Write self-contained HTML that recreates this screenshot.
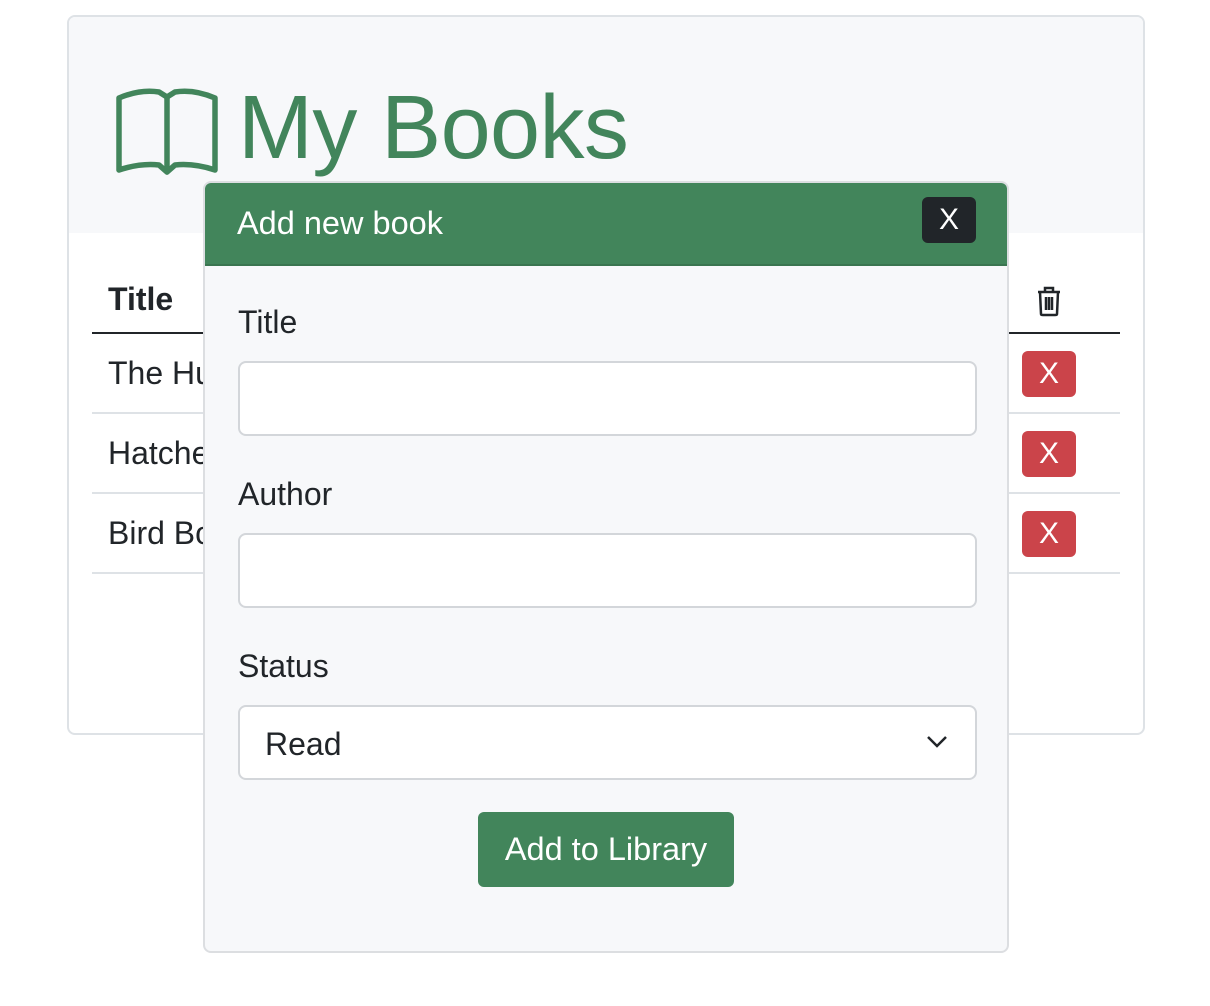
<!DOCTYPE html>
<html><head><style>
*{box-sizing:border-box;margin:0;padding:0}
body{width:1210px;height:1006px;background:#fff;font-family:"Liberation Sans",Helvetica,Arial,sans-serif;color:#212529;position:relative;overflow:hidden}
.abs{position:absolute}
.card{left:67px;top:15px;width:1078px;height:720px;border:2px solid #dee2e6;border-radius:8px;background:#fff;overflow:hidden}
.jumbo{left:0;top:0;width:100%;height:216px;background:#f7f8fa}
.h1{left:169px;top:66px;font-size:90px;color:#42855b;line-height:1;letter-spacing:-0.6px}
.row{left:23px;width:1028px;border-bottom:2px solid #dee2e6;height:80px}
.td{font-size:32px;left:16px;top:21px}
.xb{left:930px;top:17px;width:54px;height:46px;background:#cb444a;border-radius:6px;color:#fff;font-size:30px;text-align:center;line-height:46px}
.modal{left:203px;top:181px;width:806px;height:772px;background:#f7f8fa;border:2px solid #dcdee1;border-radius:8px;overflow:hidden}
.mh{left:0;top:0;width:100%;height:83px;background:#42855b;border-bottom:2px solid #3a7550}
.lbl{font-size:32px;left:33px}
.inp{left:33px;width:739px;height:75px;background:#fff;border:2px solid #d3d6da;border-radius:8px}
</style></head><body>
<div class="abs card">
 <div class="abs jumbo"></div>
 <svg class="abs" style="left:46px;top:71px" width="104" height="88" viewBox="0 0 104 88" fill="none" stroke="#42855b" stroke-width="5.5" stroke-linejoin="round">
  <path d="M4 10 Q25 1 44 4 L52 9 L60 4 Q79 1 100 10 L100 82 Q79 75 60 77 L52 84 L44 77 Q25 75 4 82 Z"/>
  <path d="M52 9 L52 82"/>
 </svg>
 <div class="abs h1">My Books</div>
 <div class="abs" style="left:39px;top:264px;font-size:32px;font-weight:bold">Title</div>
 <svg class="abs" style="left:966px;top:268px" width="28" height="32" viewBox="0 0 28 32" fill="none" stroke="#212529" stroke-width="2.5">
  <path d="M3 7 H25 M10 7 V3 H18 V7 M5 7 L6 29 Q6 30 8 30 H20 Q22 30 22 29 L23 7 M11 12 V25 M14 12 V25 M17 12 V25"/>
 </svg>
 <div class="abs" style="left:23px;top:315px;width:1028px;height:2px;background:#212529"></div>
 <div class="abs row" style="top:317px"><div class="abs td">The Hu</div><div class="abs xb">X</div></div>
 <div class="abs row" style="top:397px"><div class="abs td">Hatche</div><div class="abs xb">X</div></div>
 <div class="abs row" style="top:477px"><div class="abs td">Bird Bo</div><div class="abs xb">X</div></div>
</div>
<div class="abs modal">
 <div class="abs mh"></div>
 <div class="abs" style="left:32px;top:22px;font-size:32.5px;color:#fff">Add new book</div>
 <div class="abs" style="left:717px;top:14px;width:54px;height:46px;background:#212529;border-radius:6px;color:#fff;font-size:30px;text-align:center;line-height:46px">X</div>
 <div class="abs lbl" style="top:121px">Title</div>
 <div class="abs inp" style="top:178px"></div>
 <div class="abs lbl" style="top:293px">Author</div>
 <div class="abs inp" style="top:350px"></div>
 <div class="abs lbl" style="top:465px">Status</div>
 <div class="abs inp" style="top:522px"><div class="abs" style="left:25px;top:19px;font-size:32px">Read</div>
  <svg class="abs" style="left:686px;top:28px" width="22" height="14" viewBox="0 0 22 14" fill="none" stroke="#212529" stroke-width="2.5"><path d="M2 2 L11 11 L20 2"/></svg></div>
 <div class="abs" style="left:273px;top:629px;width:256px;height:75px;background:#42855b;border-radius:6px;color:#fff;font-size:32.5px;text-align:center;line-height:75px">Add to Library</div>
</div>
</body></html>
